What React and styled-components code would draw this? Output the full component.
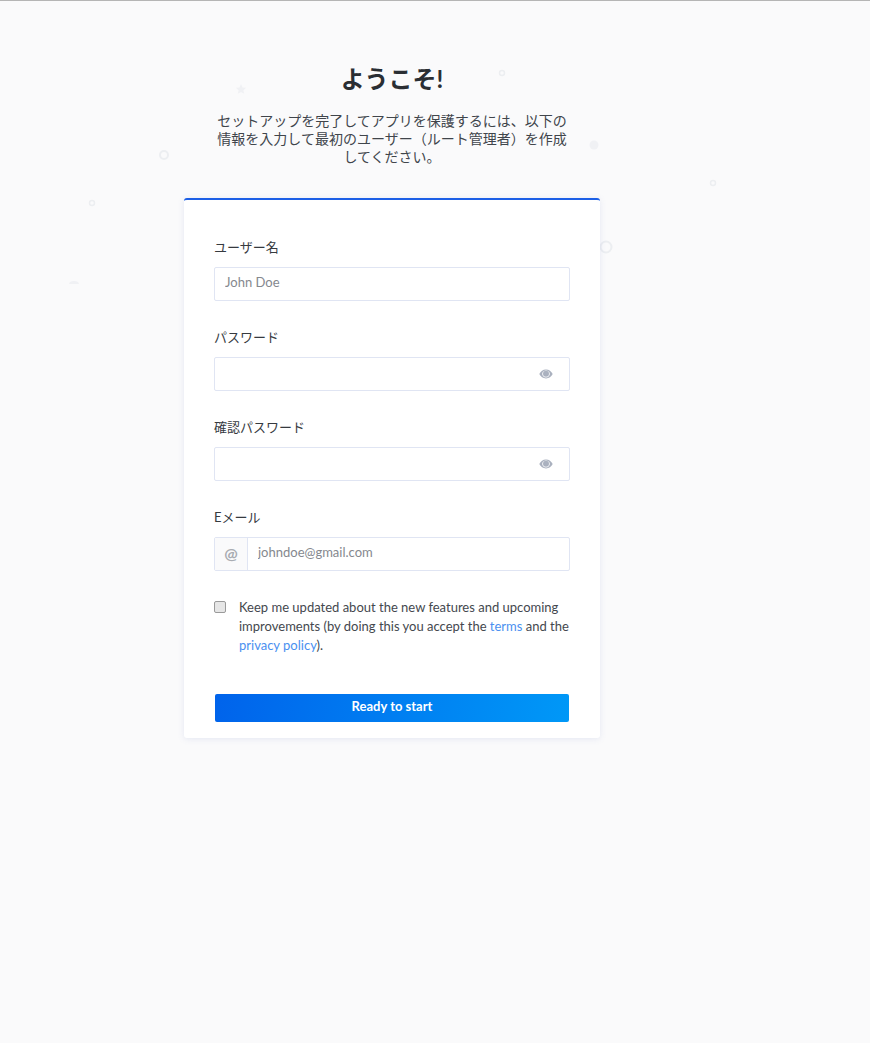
import styled, { createGlobalStyle } from 'styled-components'

const GlobalStyle = createGlobalStyle`
    html, body {
        margin: 0;
        padding: 0;
        background: #fafafb;
    }
    body {
        font-family: Lato, "Noto Sans CJK JP", sans-serif;
        color: #363a3f;
    }
    * {
        box-sizing: border-box;
    }
`

const Page = styled.div`
    position: relative;
    min-height: 1043px;
    border-top: 1px solid #b5b5b5;
    padding: 63px 0 0 184px;
    overflow: hidden;
`

const Decoration = styled.svg`
    position: absolute;
    top: -1px;
    left: 0;
    width: 870px;
    height: 300px;
`

const Column = styled.main`
    position: relative;
    width: 416px;
`

const Intro = styled.header`
    width: 356px;
    margin: 0 auto 32px;
    text-align: center;
`

const Title = styled.h1`
    margin: 0 0 18px;
    font-size: 24px;
    line-height: 30px;
    font-weight: 700;
    color: #2a2e33;
`

const Lead = styled.p`
    margin: 0;
    font-size: 14px;
    line-height: 18px;
    color: #40454b;
`

const Card = styled.form`
    height: 540px;
    padding: 37px 30px 0;
    background: #fff;
    border-top: 2px solid #1c5fe6;
    border-radius: 3px;
    box-shadow: 0 1px 6px rgba(120, 135, 200, 0.16);
`

const Field = styled.div`
    margin-bottom: 26px;
`

const Label = styled.label`
    display: block;
    margin-bottom: 10px;
    font-size: 13px;
    line-height: 20px;
    color: #363a3f;
`

const InputBox = styled.div`
    display: flex;
    align-items: center;
    height: 34px;
    background: #fff;
    border: 1px solid #e0e5f3;
    border-radius: 2px;
`

const Addon = styled.span`
    display: flex;
    align-items: center;
    justify-content: center;
    flex: none;
    width: 33px;
    height: 100%;
    padding-bottom: 3px;
    background: #fafafb;
    border-right: 1px solid #e0e5f3;
    font-size: 16px;
    font-weight: 700;
    color: #a9acb2;
`

const Input = styled.input`
    flex: 1;
    min-width: 0;
    height: 100%;
    padding: 0 10px 4px;
    border: 0;
    outline: 0;
    background: transparent;
    font-family: inherit;
    font-size: 13px;
    color: #363a3f;
    &::placeholder {
        color: #85888e;
        opacity: 1;
    }
`

const EyeButton = styled.span`
    display: flex;
    flex: none;
    margin-right: 16px;
    color: #aab1bf;
`

const Consent = styled.div`
    display: flex;
    gap: 12px;
    margin-top: 27px;
`

const Check = styled.input`
    appearance: none;
    flex: none;
    width: 12px;
    height: 12px;
    margin: 3px 1px 0 0;
    background: #e6e6e6;
    border: 1px solid #9a9a9a;
    border-radius: 2px;
`

const ConsentText = styled.label`
    font-size: 13px;
    line-height: 19px;
    color: #44484e;
`

const Link = styled.a`
    color: #4a90f0;
    text-decoration: none;
`

const Submit = styled.button`
    display: block;
    width: 354px;
    height: 28px;
    margin: 39px 0 0 1px;
    padding: 0 0 5px;
    border: 0;
    border-radius: 2px;
    background: linear-gradient(100deg, #0063eb 0%, #0098f7 100%);
    font-family: inherit;
    font-size: 13px;
    font-weight: 700;
    color: #fff;
`

const Eye = () => (
    <svg width="14" height="10" viewBox="0 0 14 10" aria-hidden="true">
        <path d="M7 .6C4 .6 1.600 2.500.3 5c1.300 2.500 3.700 4.400 6.700 4.400s5.400-1.900 6.700-4.400C12.400 2.500 10 .6 7 .6zm0 7.800C5 8.400 3.200 6.900 3.200 5S5 1.600 7 1.600 10.800 3.100 10.800 5 9 8.400 7 8.400z" fill="currentColor" />
        <circle cx="7" cy="4.800" r="3" fill="currentColor" />
    </svg>
)

const Background = () => (
    <Decoration aria-hidden="true">
        <g fill="none" stroke="#eceef1">
            <circle cx="164" cy="155" r="4" strokeWidth="2" />
            <circle cx="92" cy="203" r="2.500" strokeWidth="1.500" />
            <circle cx="502" cy="73" r="2.500" strokeWidth="1.500" />
            <circle cx="713" cy="183" r="2.500" strokeWidth="1.500" />
            <circle cx="606" cy="247" r="5.500" strokeWidth="2" />
        </g>
        <g fill="#f0f1f4">
            <circle cx="594" cy="145" r="4.500" />
            <path d="M241 84l1.500 3.400 3.700.4-2.800 2.400.8 3.600-3.200-1.900-3.200 1.900.8-3.600-2.800-2.400 3.700-.4z" />
            <path d="M69 284c0-2 2-3 5-3s5 1 5 3z" />
        </g>
    </Decoration>
)

export default function App() {
    return (
        <>
            <GlobalStyle />
            <Page>
                <Background />
                <Column>
                    <Intro>
                        <Title>ようこそ!</Title>
                        <Lead>セットアップを完了してアプリを保護するには、以下の情報を入力して最初のユーザー（ルート管理者）を作成してください。</Lead>
                    </Intro>
                    <Card>
                        <Field>
                            <Label>ユーザー名</Label>
                            <InputBox>
                                <Input placeholder="John Doe" />
                            </InputBox>
                        </Field>
                        <Field>
                            <Label>パスワード</Label>
                            <InputBox>
                                <Input type="password" />
                                <EyeButton><Eye /></EyeButton>
                            </InputBox>
                        </Field>
                        <Field>
                            <Label>確認パスワード</Label>
                            <InputBox>
                                <Input type="password" />
                                <EyeButton><Eye /></EyeButton>
                            </InputBox>
                        </Field>
                        <Field>
                            <Label>Eメール</Label>
                            <InputBox>
                                <Addon>@</Addon>
                                <Input placeholder="johndoe@gmail.com" />
                            </InputBox>
                        </Field>
                        <Consent>
                            <Check type="checkbox" />
                            <ConsentText>
                                Keep me updated about the new features and upcoming improvements (by doing this you accept the <Link href="#">terms</Link> and the <Link href="#">privacy policy</Link>).
                            </ConsentText>
                        </Consent>
                        <Submit type="button">Ready to start</Submit>
                    </Card>
                </Column>
            </Page>
        </>
    )
}
